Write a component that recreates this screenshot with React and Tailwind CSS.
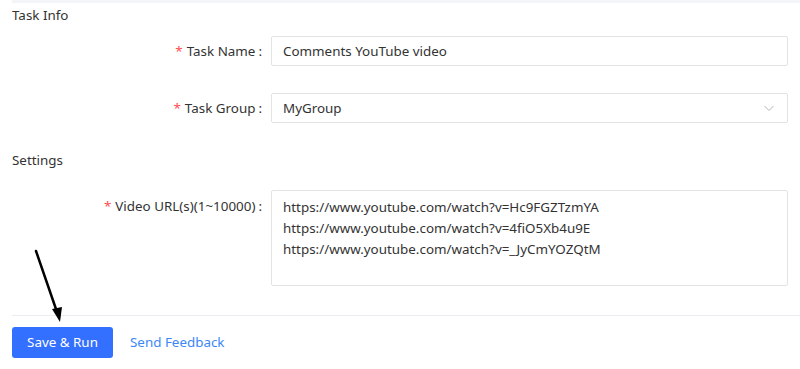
import React from "react";

const FONT = "font-['Noto_Sans','Open_Sans',sans-serif]";

function Label({ text }) {
  return (
    <div className="w-[271px] shrink-0 pr-[9px] text-right text-[13.4px] leading-[20px] text-[#333]">
      <span className="mr-1 text-[#ff4d4f]">*</span>
      {text}
      <span className="ml-[3px]">:</span>
    </div>
  );
}

export default function App() {
  return (
    <div className={`relative h-[369px] w-[800px] overflow-hidden bg-white ${FONT}`}>
      <div className="ml-3 h-[3px] bg-[#f4f5f9]" />
      <div className="mt-[2px] pl-3 text-[13.4px] leading-[20px] text-[#333]">Task Info</div>

      <div className="mt-[11px] flex items-center">
        <Label text="Task Name" />
        <div className="flex h-[30px] w-[517px] items-center rounded-[2px] border border-[#e3e3e3] px-[11px] text-[13.4px] text-[#333]">
          Comments YouTube video
        </div>
      </div>

      <div className="mt-[27px] flex items-center">
        <Label text="Task Group" />
        <div className="flex h-[30px] w-[517px] items-center justify-between rounded-[2px] border border-[#e3e3e3] px-[11px] text-[13.4px] text-[#333]">
          <span>MyGroup</span>
          <svg width="12" height="12" viewBox="0 0 12 12" fill="none" className="mr-[1px]">
            <path d="M1.5 4 L6 8.5 L10.5 4" stroke="#b5b5b5" strokeWidth="1" />
          </svg>
        </div>
      </div>

      <div className="mt-[27px] pl-3 text-[13.4px] leading-[20px] text-[#333]">Settings</div>

      <div className="mt-[20px] flex items-start">
        <div className="pt-[6px]">
          <Label text="Video URL(s)(1~10000)" />
        </div>
        <div className="h-[96px] w-[517px] rounded-[2px] border border-[#e3e3e3] px-[11px] pt-[6px] text-[13.4px] leading-[21px] text-[#333]">
          <div>https://www.youtube.com/watch?v=Hc9FGZTzmYA</div>
          <div>https://www.youtube.com/watch?v=4fiO5Xb4u9E</div>
          <div>https://www.youtube.com/watch?v=_JyCmYOZQtM</div>
        </div>
      </div>

      <div className="ml-3 mt-[29px] h-px bg-[#ececf0]" />

      <div className="mt-[11px] flex items-center pl-3">
        <button className="h-[31px] w-[101px] rounded-[3px] bg-[#3370ff] text-[13.4px] text-white">
          Save &amp; Run
        </button>
        <span className="ml-[17px] text-[13.4px] text-[#3b87f7]">Send Feedback</span>
      </div>

      <svg className="absolute left-0 top-0" width="800" height="369" viewBox="0 0 800 369" fill="none">
        <line x1="36" y1="251" x2="57" y2="312" stroke="#000" strokeWidth="2.5" strokeLinecap="round" />
        <path d="M52 309 L60 322 L62 307 Z" fill="#000" />
      </svg>
    </div>
  );
}
